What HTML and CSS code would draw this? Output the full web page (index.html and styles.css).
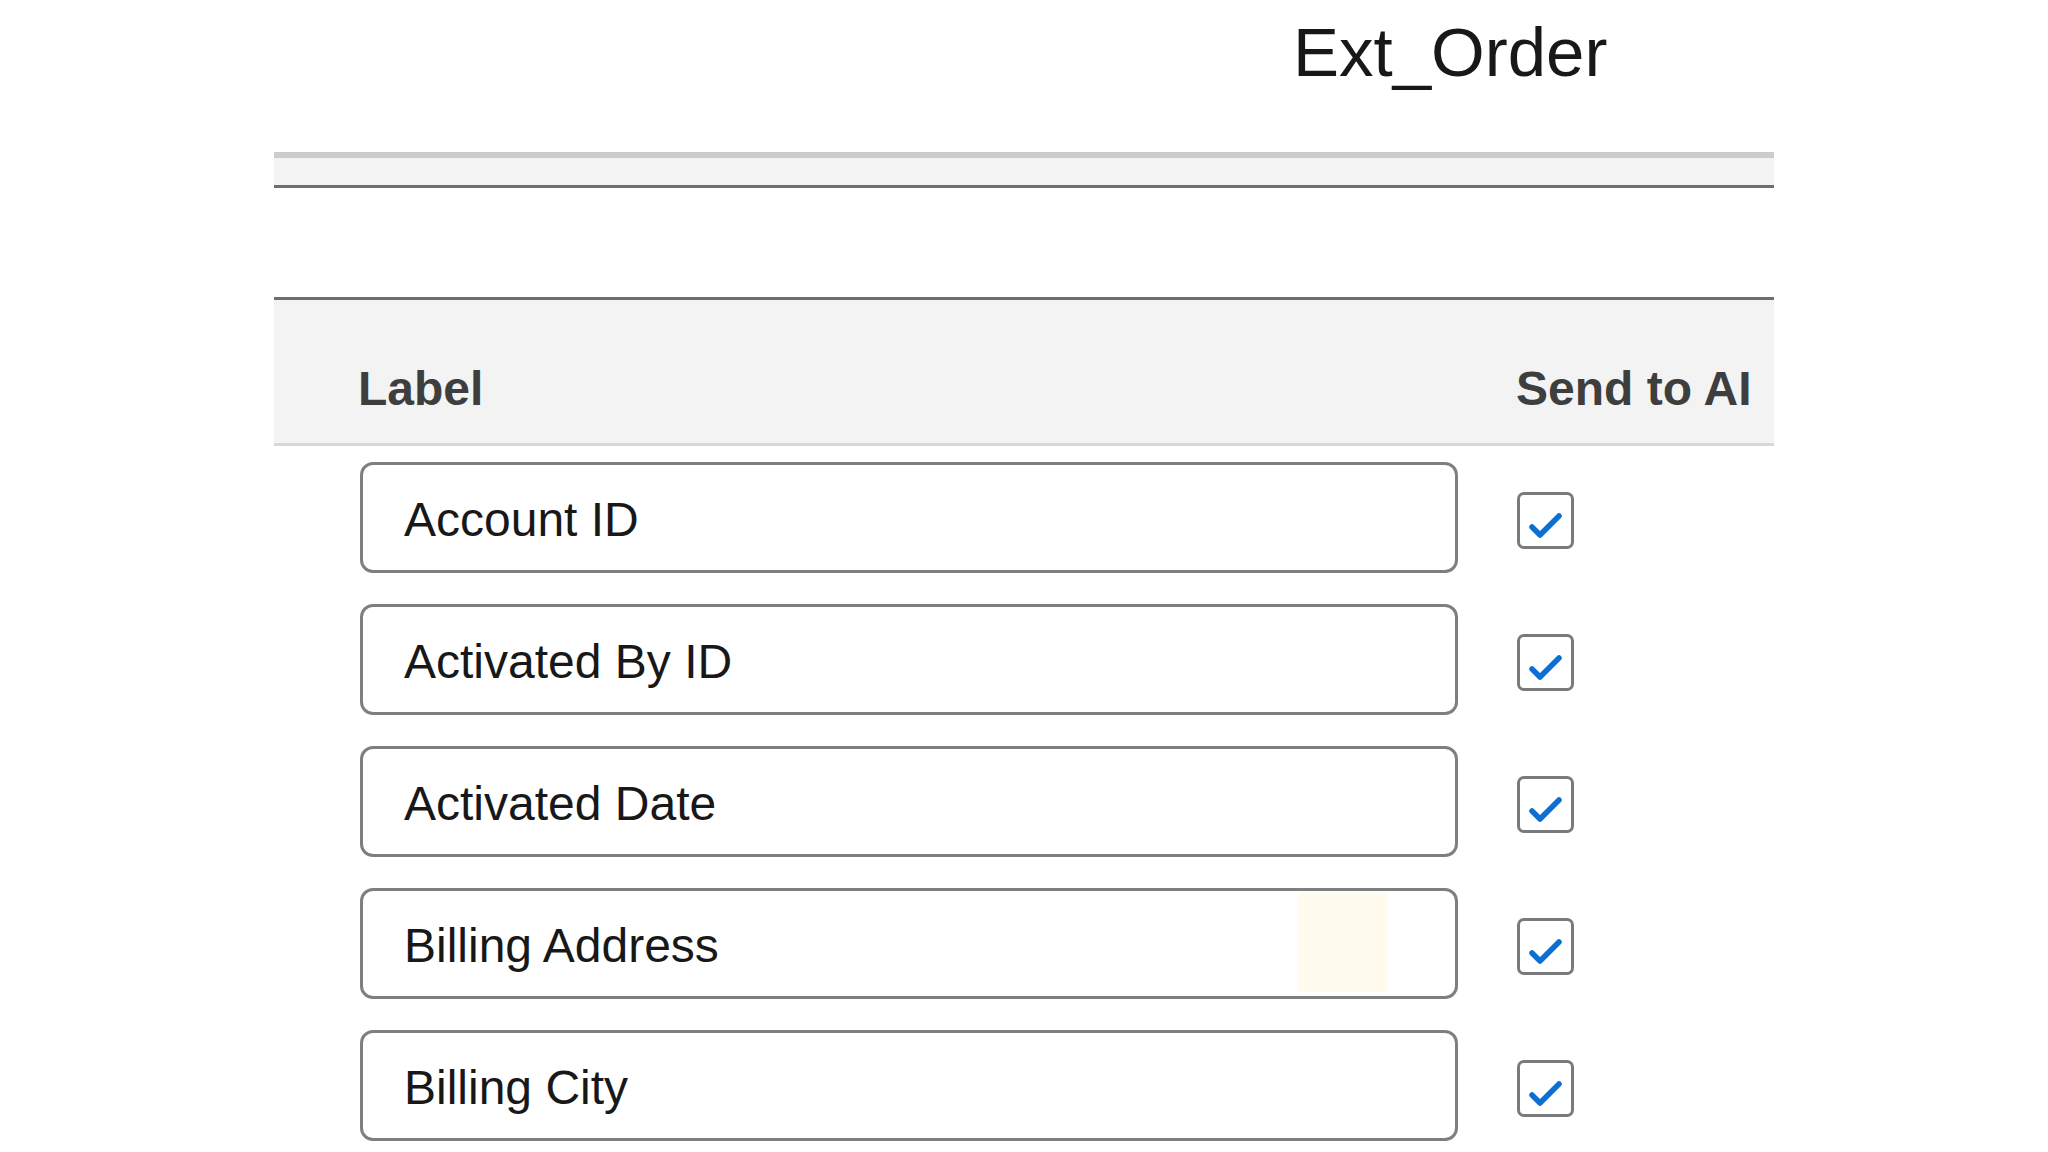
FILE: index.html
```html
<!DOCTYPE html>
<html lang="en">
<head>
    <meta charset="UTF-8">
    <meta name="viewport" content="width=device-width, initial-scale=1.0">
    <title>Ext_Order</title>
    <link rel="stylesheet" href="styles.css">
</head>
<body>
    <div class="page">
        <h1 class="object-title">Ext_Order</h1>

        <div class="tab-strip"></div>

        <div class="spacer"></div>

        <div class="field-table">
            <div class="table-head">
                <div class="head-label">Label</div>
                <div class="head-send">Send to AI</div>
            </div>

            <div class="field-rows">
                <div class="field-row">
                    <div class="field-input">Account ID</div>
                    <div class="check-box">
                        <svg viewBox="0 0 56 56" width="56" height="56"><polyline points="15,35 23,43 42,24"/></svg>
                    </div>
                </div>
                <div class="field-row">
                    <div class="field-input">Activated By ID</div>
                    <div class="check-box">
                        <svg viewBox="0 0 56 56" width="56" height="56"><polyline points="15,35 23,43 42,24"/></svg>
                    </div>
                </div>
                <div class="field-row">
                    <div class="field-input">Activated Date</div>
                    <div class="check-box">
                        <svg viewBox="0 0 56 56" width="56" height="56"><polyline points="15,35 23,43 42,24"/></svg>
                    </div>
                </div>
                <div class="field-row">
                    <div class="field-input">Billing Address<span class="highlight"></span></div>
                    <div class="check-box">
                        <svg viewBox="0 0 56 56" width="56" height="56"><polyline points="15,35 23,43 42,24"/></svg>
                    </div>
                </div>
                <div class="field-row">
                    <div class="field-input">Billing City</div>
                    <div class="check-box">
                        <svg viewBox="0 0 56 56" width="56" height="56"><polyline points="15,35 23,43 42,24"/></svg>
                    </div>
                </div>
            </div>
        </div>
    </div>
</body>
</html>
```

FILE: styles.css
```css
body {
    margin: 0;
    background-color: #ffffff;
    font-family: "Liberation Sans", Arial, sans-serif;
    color: #181818;
    overflow: hidden;
}

.page {
    width: 1500px;
    margin-left: 274px;
}

.object-title {
    margin: 13px 0 0 0;
    padding-left: 1019px;
    font-size: 69px;
    font-weight: normal;
    line-height: 80px;
    color: #181818;
}

.tab-strip {
    margin-top: 59px;
    height: 27px;
    background-color: #f3f3f3;
    border-top: 6px solid #cccccc;
    border-bottom: 3px solid #6e6e6e;
}

.spacer {
    height: 109px;
}

.table-head {
    display: grid;
    grid-template-columns: 1099px auto;
    column-gap: 59px;
    padding: 61px 0 26px 84px;
    background-color: #f3f3f3;
    border-top: 3px solid #6e6e6e;
    border-bottom: 3px solid #d8d8d8;
    font-size: 48px;
    font-weight: bold;
    line-height: 56px;
    color: #3e3e3e;
}

.field-rows {
    display: flex;
    flex-direction: column;
    gap: 31px;
    padding: 16px 0 0 86px;
}

.field-row {
    display: grid;
    grid-template-columns: 1098px auto;
    column-gap: 59px;
    align-items: start;
}

.field-input {
    position: relative;
    box-sizing: border-box;
    height: 111px;
    display: flex;
    align-items: center;
    padding: 4px 0 0 41px;
    border: 3px solid #7f7f7f;
    border-radius: 13px;
    font-size: 48px;
    color: #181818;
}

.highlight {
    position: absolute;
    left: 935px;
    top: 2px;
    width: 90px;
    height: 99px;
    background-color: #fffbee;
}

.check-box {
    box-sizing: border-box;
    width: 57px;
    height: 57px;
    margin-top: 30px;
    border: 3px solid #7a7a7a;
    border-radius: 7px;
    background-color: #ffffff;
}

.check-box svg {
    display: block;
    margin: -3px 0 0 -3px;
}

.check-box polyline {
    fill: none;
    stroke: #0b6fd4;
    stroke-width: 5.5;
    stroke-linecap: round;
    stroke-linejoin: round;
}
```
